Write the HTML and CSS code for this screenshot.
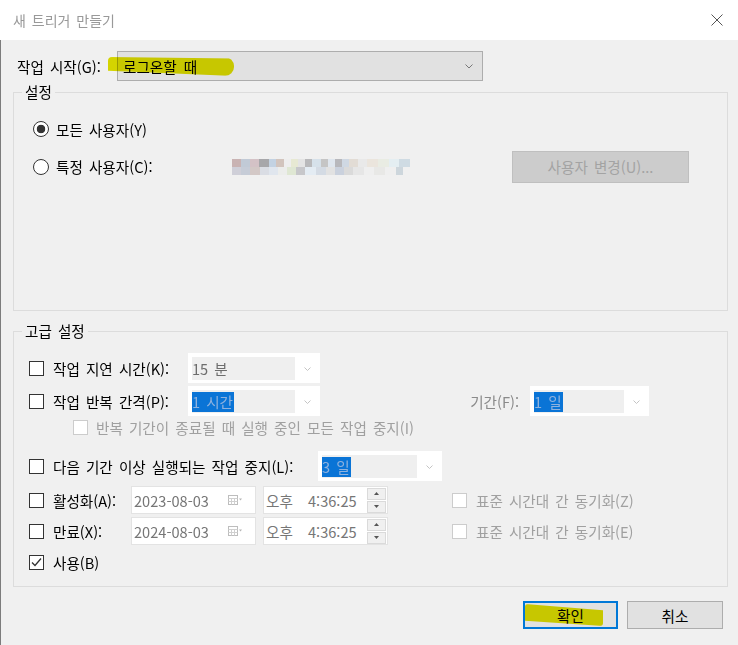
FILE: index.html
```html
<!DOCTYPE html>
<html lang="ko">
<head>
    <meta charset="UTF-8">
    <title>새 트리거 만들기</title>
    <link rel="stylesheet" href="styles.css">
</head>
<body>
  <div class="window">
    <div class="titlebar">
      <span class="title">새 트리거 만들기</span>
      <svg class="close" width="12" height="12" viewBox="0 0 12 12">
        <path d="M0.5 0.5 L11.5 11.5 M11.5 0.5 L0.5 11.5" stroke="#555" stroke-width="1" fill="none"/>
      </svg>
    </div>

    <div class="content">
      <div class="start-row">
        <span class="start-label">작업 시작(G):</span>
        <div class="combo">
          <span>로그온할 때</span>
          <svg width="8" height="5" viewBox="0 0 8 5"><path d="M0.5 0.5 L4 4 L7.5 0.5" stroke="#777" fill="none"/></svg>
        </div>
        <span class="marker marker-start"></span>
      </div>

      <div class="group group-settings">
        <span class="group-title">설정</span>
        <div class="radio-row">
          <span class="radio checked"></span>
          <span>모든 사용자(Y)</span>
        </div>
        <div class="radio-row user-row">
          <div class="radio-cell">
            <span class="radio"></span>
            <span>특정 사용자(C):</span>
          </div>
          <span class="user-blur"></span>
          <button class="btn btn-disabled">사용자 변경(U)...</button>
        </div>
      </div>

      <div class="group group-advanced">
        <span class="group-title">고급 설정</span>

        <div class="row row-1">
          <div class="cell lbl-delay">
            <span class="check"></span>
            <span>작업 지연 시간(K):</span>
          </div>
          <div class="combo-dis w-132">
            <span class="field">15 분</span>
            <span class="arrow"><svg width="7" height="4" viewBox="0 0 7 4"><path d="M0.5 0.5 L3.5 3.5 L6.5 0.5" stroke="#c4c4c4" fill="none"/></svg></span>
          </div>
        </div>

        <div class="row row-2">
          <div class="cell lbl-delay">
            <span class="check"></span>
            <span>작업 반복 간격(P):</span>
          </div>
          <div class="combo-dis w-132">
            <span class="field"><span class="sel">1 시간</span></span>
            <span class="arrow"><svg width="7" height="4" viewBox="0 0 7 4"><path d="M0.5 0.5 L3.5 3.5 L6.5 0.5" stroke="#c4c4c4" fill="none"/></svg></span>
          </div>
          <span class="period-label">기간(F):</span>
          <div class="combo-dis w-119">
            <span class="field"><span class="sel">1 일</span></span>
            <span class="arrow"><svg width="7" height="4" viewBox="0 0 7 4"><path d="M0.5 0.5 L3.5 3.5 L6.5 0.5" stroke="#c4c4c4" fill="none"/></svg></span>
          </div>
        </div>

        <div class="row row-3">
          <span class="check disabled"></span>
          <span class="muted">반복 기간이 종료될 때 실행 중인 모든 작업 중지(I)</span>
        </div>

        <div class="row row-4">
          <div class="cell lbl-stop">
            <span class="check"></span>
            <span>다음 기간 이상 실행되는 작업 중지(L):</span>
          </div>
          <div class="combo-dis w-124">
            <span class="field"><span class="sel">3 일</span></span>
            <span class="arrow"><svg width="7" height="4" viewBox="0 0 7 4"><path d="M0.5 0.5 L3.5 3.5 L6.5 0.5" stroke="#c4c4c4" fill="none"/></svg></span>
          </div>
        </div>

        <div class="row row-5">
          <div class="cell lbl-date">
            <span class="check"></span>
            <span>활성화(A):</span>
          </div>
          <div class="datebox">
            <span>2023-08-03</span>
            <svg class="cal" width="15" height="10" viewBox="0 0 15 10">
              <rect x="0.5" y="0.5" width="9" height="9" fill="#fff" stroke="#bdbdbd"/>
              <path d="M0.5 3.5 H9.5 M0.5 6.5 H9.5 M3.5 3.5 V9.5 M6.5 3.5 V9.5" stroke="#d0d0d0"/>
              <path d="M11 3.5 L14 3.5 L12.5 5.5 Z" fill="#b5b5b5"/>
            </svg>
          </div>
          <div class="timebox">
            <span class="ampm">오후</span>
            <span>4:36:25</span>
            <div class="spin">
              <span class="spin-btn"><svg width="5" height="3" viewBox="0 0 5 3"><path d="M0 3 L2.5 0 L5 3 Z" fill="#555"/></svg></span>
              <span class="spin-btn"><svg width="5" height="3" viewBox="0 0 5 3"><path d="M0 0 L2.5 3 L5 0 Z" fill="#555"/></svg></span>
            </div>
          </div>
          <div class="sync">
            <span class="check disabled"></span>
            <span class="muted">표준 시간대 간 동기화(Z)</span>
          </div>
        </div>

        <div class="row row-6">
          <div class="cell lbl-date">
            <span class="check"></span>
            <span>만료(X):</span>
          </div>
          <div class="datebox">
            <span>2024-08-03</span>
            <svg class="cal" width="15" height="10" viewBox="0 0 15 10">
              <rect x="0.5" y="0.5" width="9" height="9" fill="#fff" stroke="#bdbdbd"/>
              <path d="M0.5 3.5 H9.5 M0.5 6.5 H9.5 M3.5 3.5 V9.5 M6.5 3.5 V9.5" stroke="#d0d0d0"/>
              <path d="M11 3.5 L14 3.5 L12.5 5.5 Z" fill="#b5b5b5"/>
            </svg>
          </div>
          <div class="timebox">
            <span class="ampm">오후</span>
            <span>4:36:25</span>
            <div class="spin">
              <span class="spin-btn"><svg width="5" height="3" viewBox="0 0 5 3"><path d="M0 3 L2.5 0 L5 3 Z" fill="#555"/></svg></span>
              <span class="spin-btn"><svg width="5" height="3" viewBox="0 0 5 3"><path d="M0 0 L2.5 3 L5 0 Z" fill="#555"/></svg></span>
            </div>
          </div>
          <div class="sync">
            <span class="check disabled"></span>
            <span class="muted">표준 시간대 간 동기화(E)</span>
          </div>
        </div>

        <div class="row row-7">
          <div class="cell">
            <span class="check checked">
              <svg width="13" height="13" viewBox="0 0 13 13"><path d="M2 6.5 L5 9.5 L11 2.5" stroke="#333" stroke-width="1.3" fill="none"/></svg>
            </span>
            <span>사용(B)</span>
          </div>
        </div>
      </div>

      <div class="actions">
        <button class="btn btn-ok">확인<span class="marker marker-ok"></span></button>
        <button class="btn">취소</button>
      </div>
    </div>
  </div>
</body>
</html>
```

FILE: styles.css
```css
*{
    margin: 0;
    padding: 0;
    box-sizing: border-box;
}
body{
    background-color: #f0f0f0;
    font-family: "Noto Sans CJK KR", "Noto Sans", sans-serif;
    font-size: 14.6px;
    color: #000;
}
.window{
    height: 645px;
    overflow: hidden;
}
.titlebar{
    height: 40px;
    background-color: #fff;
    display: flex;
    align-items: center;
    justify-content: space-between;
    padding: 0 15px 0 13px;
}
.title{
    color: #999;
    font-size: 14px;
    word-spacing: 2px;
}
.content{
    height: 605px;
    border-left: 1px solid #7c7c7c;
    padding: 11px 10px 0 12px;
}

/* top combo */
.start-row{
    position: relative;
    display: flex;
    align-items: center;
    height: 30px;
    padding-left: 4px;
}
.start-label{
    width: 100px;
    word-spacing: 2px;
}
.combo{
    width: 366px;
    height: 30px;
    background-color: #e1e1e1;
    border: 1px solid #adadad;
    display: flex;
    align-items: center;
    justify-content: space-between;
    padding: 0 9px 0 5px;
    word-spacing: 3px;
}
.marker{
    position: absolute;
    background-color: #e2e200;
    mix-blend-mode: multiply;
    pointer-events: none;
}
.marker-start{
    left: 95px;
    top: 6px;
    width: 126px;
    height: 19px;
    border-radius: 4px 9px 9px 4px;
    clip-path: polygon(0 0, 100% 8%, 100% 100%, 0 72%);
}

/* groups */
.group{
    position: relative;
    border: 1px solid #dcdcdc;
}
.group-title{
    position: absolute;
    top: -11px;
    left: 8px;
    padding: 0 3px;
    line-height: 20px;
    background-color: #f0f0f0;
    word-spacing: 2px;
}
.group-settings{
    margin-top: 11px;
    height: 219px;
    padding: 24px 38px 0 19px;
}
.radio-row{
    display: flex;
    align-items: center;
    gap: 7px;
    height: 24px;
    word-spacing: 2px;
}
.user-row{
    margin-top: 10px;
    height: 31px;
    gap: 0;
}
.radio-cell{
    width: 199px;
    display: flex;
    align-items: center;
    gap: 7px;
}
.radio{
    width: 16px;
    height: 16px;
    border: 1px solid #333;
    border-radius: 50%;
    background-color: #fff;
    flex: none;
}
.radio.checked{
    background: radial-gradient(circle, #333 0 4px, #fff 4.6px);
}
.user-blur{
    width: 178px;
    height: 16px;
    background:
        linear-gradient(90deg, #c9b3b3 0 5%, #c1cad6 5% 10%, #d4c2c6 10% 15%, #a7a7aa 15% 21%, #c3d2e2 21% 25%, #d2c4bd 25% 29%, #eeeeee 29% 33%, #e7e9d3 33% 37%, #e4e4e4 37% 41%, #b9b9bb 41% 45%, #d6e1ea 45% 50%, #c5c5c5 50% 54%, #dfe6ee 54% 58%, #b8b8bc 58% 62%, #cfd8e3 62% 66%, #e2dcd5 66% 71%, #e9e9e9 71% 76%, #ebe5dd 76% 82%, #e9ece3 82% 88%, #e4eef2 88% 94%, #cfdbe3 94% 100%) top / 100% 50% no-repeat,
        linear-gradient(90deg, #cfcfd8 0 5%, #c6ccd7 5% 10%, #d3c8c6 10% 16%, #dadde4 16% 21%, #e0e6ee 21% 26%, #ecedeb 26% 31%, #dfe7d3 31% 36%, #c7c7ca 36% 41%, #e4ecf3 41% 47%, #d4dbe4 47% 53%, #e2e2e2 53% 58%, #cad1dd 58% 63%, #dadada 63% 68%, #e6e6e6 68% 74%, #efefef 74% 80%, #e8e8e6 80% 86%, #efefef 86% 92%, #cdd6dc 92% 96%, #f0f0f0 96% 100%) bottom / 100% 50% no-repeat;
}
.btn{
    position: relative;
    font-family: inherit;
    font-size: 14.6px;
    color: #000;
    background-color: #e1e1e1;
    border: 1px solid #adadad;
    height: 28px;
    width: 96px;
}
.btn-disabled{
    margin-left: auto;
    width: 177px;
    height: 32px;
    background-color: #cccccc;
    border-color: #bfbfbf;
    color: #a3a3a3;
    word-spacing: 2px;
}

/* advanced */
.group-advanced{
    margin-top: 20px;
    height: 256px;
    padding: 21px 0 0 15px;
}
.row{
    display: flex;
    align-items: center;
    word-spacing: 2px;
}
.row-1{ height: 30px; }
.row-2{ height: 30px; margin-top: 3px; }
.row-3{ height: 18px; margin-top: 2px; padding-left: 44px; gap: 8px; }
.row-4{ height: 28px; margin-top: 16px; }
.row-5{ height: 28px; margin-top: 6px; }
.row-6{ height: 28px; margin-top: 3px; }
.row-7{ height: 19px; margin-top: 8px; }
.cell{
    display: flex;
    align-items: center;
    gap: 9px;
}
.lbl-delay{ width: 159px; }
.lbl-stop{ width: 289px; }
.lbl-date{ width: 102px; }
.check{
    width: 15px;
    height: 15px;
    border: 1px solid #333;
    background-color: #fff;
    flex: none;
    display: flex;
    align-items: center;
    justify-content: center;
}
.check.disabled{
    border-color: #cccccc;
}
.muted{
    color: #a0a0a0;
}
.combo-dis{
    height: 30px;
    background-color: #fff;
    display: flex;
    padding: 4px 0 3px 4px;
    color: #6d6d6d;
}
.w-132{ width: 132px; }
.w-119{ width: 119px; }
.w-124{ width: 124px; }
.combo-dis .field{
    flex: 1;
    background-color: #efefef;
    display: flex;
    align-items: center;
}
.combo-dis .arrow{
    width: 25px;
    display: flex;
    align-items: center;
    justify-content: center;
}
.sel{
    background-color: #0a74d6;
    color: #8fb2de;
    line-height: 20px;
    padding-right: 1px;
}
.period-label{
    width: 210px;
    text-align: right;
    padding-right: 11px;
    color: #8a8a8a;
}
.datebox, .timebox{
    width: 125px;
    height: 28px;
    background-color: #fff;
    border: 1px solid #e3e3e3;
    display: flex;
    align-items: center;
    color: #767676;
}
.datebox{
    padding: 0 12px 0 2px;
    justify-content: space-between;
}
.timebox{
    margin-left: 7px;
    padding: 0 1px 0 2px;
}
.ampm{
    width: 42px;
}
.spin{
    margin-left: auto;
    display: flex;
    flex-direction: column;
    gap: 1px;
}
.spin-btn{
    width: 19px;
    height: 12px;
    background-color: #f0f0f0;
    border: 1px solid #dadada;
    display: flex;
    align-items: center;
    justify-content: center;
}
.sync{
    margin-left: 64px;
    display: flex;
    align-items: center;
    gap: 9px;
}

/* bottom buttons */
.actions{
    display: flex;
    justify-content: flex-end;
    gap: 9px;
    margin-top: 14px;
    padding-right: 5px;
}
.btn-ok{
    width: 95px;
    border: 2px solid #0078d7;
}
.marker-ok{
    left: 0;
    top: 1px;
    width: 78px;
    height: 22px;
    border-radius: 3px;
    clip-path: polygon(0 0, 100% 28%, 100% 100%, 0 76%);
}
```
